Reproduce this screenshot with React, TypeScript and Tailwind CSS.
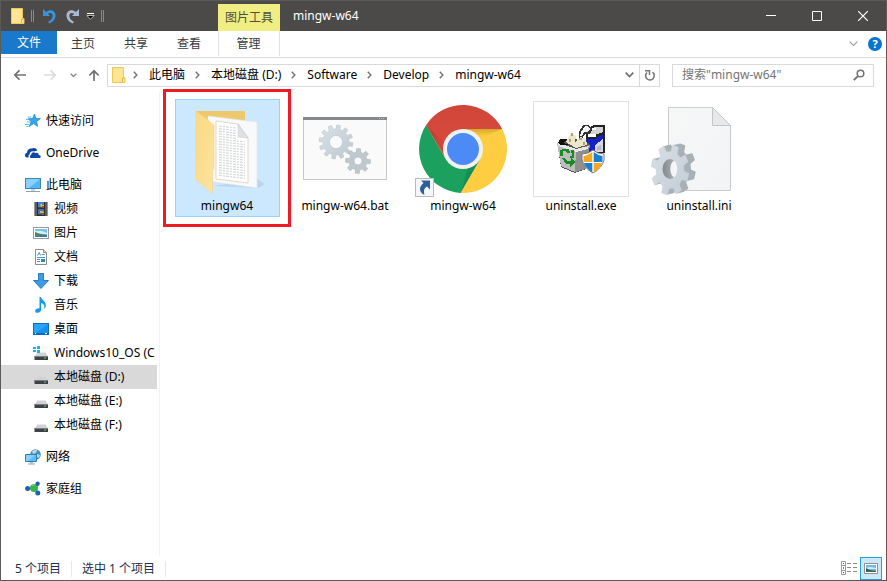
import type { ReactNode } from "react";
import clsx from "clsx";

const FONT = "font-['Noto_Sans','Noto_Sans_CJK_SC',sans-serif]";

// Closed outline of a cog wheel around (cx, cy)
function gear(cx: number, cy: number, outer: number, inner: number, teeth: number, turn = 0, tall = 1) {
  const step = (Math.PI * 2) / teeth;
  const pts: string[] = [];
  for (let i = 0; i < teeth; i++) {
    const a = i * step + turn;
    [
      [inner, -0.3],
      [outer, -0.2],
      [outer, 0.2],
      [inner, 0.3],
    ].forEach(([r, k]) => {
      const x = cx + r * Math.cos(a + k * step);
      const y = cy + r * tall * Math.sin(a + k * step);
      pts.push(`${x.toFixed(2)} ${y.toFixed(2)}`);
    });
  }
  return `M${pts.join("L")}Z`;
}

function hole(cx: number, cy: number, rx: number, ry = rx) {
  return `M${cx - rx} ${cy}a${rx} ${ry} 0 1 0 ${rx * 2} 0a${rx} ${ry} 0 1 0 ${-rx * 2} 0Z`;
}

/* ---------- small icons ---------- */

function Icon16({ children }: { children: ReactNode }) {
  return (
    <svg width="16" height="16" viewBox="0 0 16 16" className="shrink-0" aria-hidden="true">
      {children}
    </svg>
  );
}

function SmallFolder() {
  return (
    <svg width="14" height="18" viewBox="0 0 14 18" className="shrink-0" aria-hidden="true">
      <path d="M.5 1.500h11v10h1.500v5H.5z" fill="#ffe594" stroke="#eec84f" />
      <path d="M10.500 16V12h2.500" fill="none" stroke="#e6b93c" />
    </svg>
  );
}

function StarIcon() {
  return (
    <Icon16>
      <path d="M9.500 1l1.300 4.400 4.700.2-3.900 2.800 1 5-4-2.800-4.300 2.900 1.800-4.900L3 5.800l4.500-.2z" fill="#2fa8ec" stroke="#1b87cf" strokeWidth=".7" />
      <path d="M3 4h3M1 6.500h3M2 9h3M0 11.500h4M1.500 13.500h2" stroke="#5cbdf0" strokeWidth="1" />
    </Icon16>
  );
}

function OneDriveIcon() {
  return (
    <Icon16>
      <path d="M0 10.500C0 8.600 1 8 2 7.800 2 5 4.500 3 7 3.600 8.200 2.600 11.500 2.700 12.300 5.600L9 6.500C7 5.500 4.600 7 4.600 9.200 3.500 10 3.300 11.500 3.700 12.500H2C.8 12.500 0 11.500 0 10.500z" fill="#0d47a6" />
      <path d="M6.300 13C4.500 12.800 4.300 10.200 6.200 9.900 6.200 7.500 9 6.500 10.500 8.200 12 7.300 13.800 8.300 13.700 10 16.200 10 16.300 13 14.200 13z" fill="#0d47a6" />
    </Icon16>
  );
}

function PcIcon() {
  return (
    <Icon16>
      <rect x=".5" y="1.500" width="15" height="10" fill="#53b7f5" stroke="#3f85ae" />
      <path d="M1 2h14L4 11H1z" fill="#8ad2fb" />
      <path d="M6 12h4v2H6z" fill="#c6d5de" />
      <path d="M1 14.500h14" stroke="#8aa4b5" />
    </Icon16>
  );
}

function VideoIcon() {
  return (
    <Icon16>
      <rect x="1.500" y="1" width="13" height="14" fill="#2e2e2e" />
      <path d="M3 1.500v13M13 1.500v13" stroke="#e6e6e6" strokeDasharray="1 1" />
      <rect x="5" y="1" width="6" height="6" fill="#4a7fd6" />
      <rect x="5" y="8" width="6" height="6" fill="#3f72c4" />
      <path d="M7 3h2v1h2v2H8zM7 10h2l2 1v1H7z" fill="#e9b92e" />
      <path d="M9 5h2v2H9zM8 12h3v1H8z" fill="#c33a2a" />
      <path d="M5 6h4v1H5zM5 13h4v1H5z" fill="#2c5c33" />
    </Icon16>
  );
}

function PictureIcon() {
  return (
    <Icon16>
      <rect x=".5" y="2.500" width="15" height="11" fill="#fff" stroke="#9a9a9a" />
      <rect x="2" y="4" width="12" height="8" fill="#79c1ee" />
      <path d="M2 6h7l5 2v1H2z" fill="#d8effb" />
      <path d="M2 7l4 1.500 8 1.500v2H2z" fill="#4d8567" />
      <path d="M5 11l9-1v2H4z" fill="#3e78a8" />
    </Icon16>
  );
}

function DocumentIcon() {
  return (
    <Icon16>
      <path d="M2.500.500h8l3 3v12h-11z" fill="#fff" stroke="#8d8d8d" />
      <path d="M10.500.500v3h3" fill="#ddd" stroke="#8d8d8d" />
      <path d="M4.500 6.500l1.700-3 1.300 3M8.500 5.500h3M4 8.500h8M4 10.500h3M4 12.500h3" stroke="#3f93cc" fill="none" />
      <path d="M8 10h4v3H8z" fill="#3587bd" />
    </Icon16>
  );
}

function DownloadIcon() {
  return (
    <Icon16>
      <path d="M5.500.500h5v7h5L8 15.500.500 7.500h5z" fill="#3d9be6" stroke="#2b7cc1" />
    </Icon16>
  );
}

function MusicIcon() {
  return (
    <Icon16>
      <path d="M6.500 0h1.500c.5 3 5 4 4.800 8.500-.1 1.500-.8 3-1.800 3.500.8-2.500.5-5-2.800-6v6.200c0 2.300-1.900 3.600-3.700 3.600-3.400 0-3.200-4.900 2-4.600z" fill="#149aee" />
    </Icon16>
  );
}

function DesktopIcon() {
  return (
    <Icon16>
      <rect x=".5" y="2.500" width="15" height="11" fill="#1492f0" stroke="#0c6eb8" />
      <path d="M1 3h14L3 12H1z" fill="#2aa4fb" />
      <path d="M1 12.500h14" stroke="#0b68b1" />
      <path d="M2 12.500h1M12 12.500h2" stroke="#fff" />
    </Icon16>
  );
}

function DriveIcon({ system }: { system?: boolean }) {
  return (
    <Icon16>
      <path d="M4.500 7.500h8L15 11.500H1.500z" fill="#d0d2d4" />
      <path d="M1.500 11h13.500v4H1.500z" fill="#3f4244" />
      <path d="M1.500 11.500h13.500" stroke="#7c7f81" />
      <rect x="11" y="12.500" width="2" height="1" fill="#45e05a" />
      {system && (
        <>
          <path d="M0 1h7v6H0z" fill="#fff" />
          <path d="M0 2h3v2H0zM4 1h3v3H4zM0 5h3v2H0zM4 5h3v3H4z" fill="#19b1ee" />
        </>
      )}
    </Icon16>
  );
}

function NetworkIcon() {
  return (
    <Icon16>
      <circle cx="10.500" cy="5.500" r="5.300" fill="#4d8fb5" />
      <path d="M7 2.500c2-2 4-2 5-1.500l-1 3-3 1zM12 5l3 1-1 3-2-1z" fill="#b6dbed" />
      <path d="M.5 5.500h11v7H.5z" fill="#5dbdf8" stroke="#2e7eb4" />
      <path d="M1 6h9l-7 6H1z" fill="#88d1fb" />
      <path d="M5 13h3v1.500H5z" fill="#a9bfcc" />
      <path d="M3 15h7" stroke="#8ba5b5" />
    </Icon16>
  );
}

function HomeGroupIcon() {
  return (
    <Icon16>
      <path d="M3 7.500l6-1 4-4M9 7l4 6" stroke="#9ab7c9" strokeWidth="1" fill="none" />
      <circle cx="9" cy="7" r="4" fill="#38b449" />
      <path d="M6 5a3.500 3.500 0 0 1 5-1z" fill="#7fdc85" />
      <circle cx="2.600" cy="7.500" r="2.500" fill="#1c62b2" />
      <circle cx="12.600" cy="2.800" r="2.200" fill="#1c62b2" />
      <circle cx="12.800" cy="12" r="2.500" fill="#1c62b2" />
    </Icon16>
  );
}

/* ---------- large icons ---------- */

function Icon96({ children }: { children: ReactNode }) {
  return (
    <svg width="96" height="96" viewBox="0 0 96 96" className="shrink-0" aria-hidden="true">
      {children}
    </svg>
  );
}

function FolderLarge() {
  const lines = Array.from({ length: 20 }, (_, i) => 26 + i * 2.6);
  return (
    <Icon96>
      <defs>
        <linearGradient id="flap" x1="0" y1="0" x2="1" y2="1">
          <stop offset="0" stopColor="#f9d982" />
          <stop offset="1" stopColor="#ffe3a0" />
        </linearGradient>
      </defs>
      <path d="M35 85l44 2 7-4-8-5z" fill="#a9c4d8" opacity=".5" />
      <path d="M17 10h49v12H30z" fill="#edc86c" />
      <path d="M29 15l49 6v66l-49-7z" fill="#f8f9fa" stroke="#e3e6e8" strokeWidth=".7" />
      <path d="M37 20l22 3 10 14v45l-32-4z" fill="#fff" stroke="#dccfae" strokeWidth=".8" />
      {lines.map((y) => (
        <path key={y} d={`M40 ${y - 1}l${y < 38 ? 17 : 26} ${y < 38 ? 2 : 3}`} stroke="#d6d8d9" strokeWidth="1.200" strokeDasharray="3 1 2 1" />
      ))}
      <path d="M59 23l10 14-10-1z" fill="#dfe1e3" stroke="#c4c6c8" strokeWidth=".5" />
      <path d="M17 10l18 14v43l-1.500 3v22L17 79z" fill="url(#flap)" stroke="#f3d488" strokeWidth=".6" />
    </Icon96>
  );
}

function BatLarge() {
  return (
    <Icon96>
      <defs>
        <linearGradient id="cog" x1="0" y1="0" x2="1" y2="1">
          <stop offset="0" stopColor="#dae2e8" />
          <stop offset="1" stopColor="#bcc7cf" />
        </linearGradient>
      </defs>
      <rect x="6.500" y="16.500" width="83" height="62" fill="#fafafa" stroke="#c6c8c9" />
      <rect x="6" y="16" width="84" height="3" fill="#85898c" />
      <path d="M82 17.500h6" stroke="#b8bcbe" strokeDasharray="1 1" />
      <path d={gear(39, 41, 17, 13, 12, 0.15) + hole(39, 41, 6.500)} fill="url(#cog)" fillRule="evenodd" stroke="#c0cad1" strokeWidth=".7" strokeLinejoin="round" />
      <path d={gear(61, 60, 12.500, 9, 8, 0.05) + hole(61, 60, 4)} fill="#bec8cd" fillRule="evenodd" stroke="#b1bbc1" strokeWidth=".7" strokeLinejoin="round" />
    </Icon96>
  );
}

function ChromeLarge() {
  return (
    <Icon96>
      <defs>
        <linearGradient id="redBand" x1="0" y1="0" x2="0" y2="1">
          <stop offset="0" stopColor="#cf4639" />
          <stop offset="1" stopColor="#dc4b3e" />
        </linearGradient>
        <linearGradient id="redShade" x1="0" y1="0" x2="1" y2="0">
          <stop offset="0" stopColor="#a3352b" stopOpacity=".6" />
          <stop offset="1" stopColor="#a3352b" stopOpacity="0" />
        </linearGradient>
        <linearGradient id="yellowShade" x1="0" y1="0" x2="0" y2="1">
          <stop offset="0" stopColor="#bd8b1a" stopOpacity=".6" />
          <stop offset="1" stopColor="#e5b02b" stopOpacity="0" />
        </linearGradient>
      </defs>
      <path d="M11.100 24.100A44 44 0 0 0 45.700 91.900L65.300 58 48 48 30.700 58z" fill="#1ba05e" />
      <path d="M87.200 28A44 44 0 0 1 45.700 91.900L65.300 58 48 48V28z" fill="#ffcd42" />
      <path d="M11.100 24.100A44 44 0 0 1 87.200 28H48v20L30.700 58z" fill="url(#redBand)" />
      <path d="M11.100 24.100L30.700 58 30 42z" fill="url(#redShade)" />
      <path d="M50 28h37L66 37z" fill="url(#yellowShade)" />
      <path d="M65.300 58L45.700 91.900 53 66z" fill="#0b6b3b" opacity=".3" />
      <circle cx="48" cy="48" r="20" fill="#f1f1f1" />
      <circle cx="48" cy="48" r="16" fill="#4c8bf5" />
      {/* shortcut overlay */}
      <rect x=".5" y="77.500" width="18" height="18" fill="#f4f5f6" stroke="#b7bbbe" />
      <path d="M6 79.500h9v9l-3-3c-3 1.500-3.500 4.500-2.500 8.500-5-2.500-6.500-7.500-1-12z" fill="#2d5f9e" />
    </Icon96>
  );
}

function UninstallerLarge() {
  return (
    <Icon96>
      <rect x=".5" y=".5" width="95" height="95" fill="#fff" stroke="#e0e0e0" />
      <g shapeRendering="crispEdges">
        {/* box */}
        <path d="M57 26l4-2h11v28H53V33z" fill="#222" />
        <path d="M61 26h9v5l-9 3h-5z" fill="#d4d4d4" />
        <path d="M58 27h5v2h-5zM55 33h8v3h-8z" fill="#fff" />
        <path d="M51 38h11v13H51z" fill="#1420c8" />
        <path d="M62 38l8-4v17h-8z" fill="#d8d8e4" />
        <path d="M62 38l8-5v5l-8 6z" fill="#1420c8" />
        <path d="M64 46l4-2v5h-4z" fill="#b8b8c4" />
        <path d="M46 31l4-7h6l3 4-2 5h-5l-3 5h-3z" fill="#333" />
        <path d="M48 31l4-6h3l2 3-2 3h-4l-2 4h-2z" fill="#f2f2f2" />
        {/* recycle bin */}
        <path d="M24 42l4-4h15l14 5-4 25-11 4-14-6z" fill="#555" />
        <path d="M24 42l19 6 14-3-5 23-10 3-14-6z" fill="#bdbdbd" />
        <path d="M43 48l14-4-4 24-11 3z" fill="#8f8f8f" />
        <path d="M25 42l18 6 13-3-1 3-12 3-18-6z" fill="#e8e8e8" />
        <path d="M27 38h7l-4 4 6 2h-8l-3-2z" fill="#111" />
        <path d="M33 41l5-9 5 3-1 7 5-6 6 2 1 6-11 3z" fill="#ece7c8" />
        <path d="M38 32h2v3h-2zM36 38h2v3h-2zM46 37h3v2h-3zM50 41h2v3h-2z" fill="#aaa477" />
        <path d="M30 48h6l1 4h-3l-1-2h-3v5h-3v-6zM38 49h3v8h-4v-2h2zM29 57h3l2 3h4v-3l4 4-5 5v-3h-4z" fill="#178a24" />
      </g>
      <path d="M60 49l5 3 6 1v6q-2 8-11 13-9-5-11-13v-6l6-1z" fill="#fff" stroke="#777" strokeWidth="1" />
      <path d="M59.300 51v10H50.500v-6l4-1zM60.700 62v9.500q6-4 8.500-9.500z" fill="#f7a823" />
      <path d="M60.700 51v10h8.800v-6l-4-1zM59.300 62v9.500q-6-4-8.500-9.500z" fill="#1a7fd4" />
    </Icon96>
  );
}

function IniLarge() {
  const depth = [7, 6, 5, 4, 3, 2, 1];
  return (
    <Icon96>
      <defs>
        <linearGradient id="page" x1="0" y1="0" x2="1" y2="1">
          <stop offset="0" stopColor="#f6f7f7" />
          <stop offset="1" stopColor="#f2f4f6" />
        </linearGradient>
        <linearGradient id="face" x1="0" y1="0" x2="1" y2="1">
          <stop offset="0" stopColor="#d7dee5" />
          <stop offset="1" stopColor="#c4ced7" />
        </linearGradient>
        <linearGradient id="bore" x1="0" y1="0" x2="1" y2="0">
          <stop offset="0" stopColor="#85898c" />
          <stop offset="1" stopColor="#b5b9bc" />
        </linearGradient>
      </defs>
      <path d="M17.500 6.500h44l18 18v65h-62z" fill="url(#page)" stroke="#c9cbcc" />
      <path d="M61.500 6.500v18h18z" fill="#e6e8e9" stroke="#c3c5c6" />
      {depth.map((d) => (
        <path key={d} d={gear(19 + d, 69 - d / 4, 19, 14, 8, 0.3, 1.33)} fill="#a9b1b7" />
      ))}
      <path d={gear(19, 69, 19, 14, 8, 0.3, 1.33)} fill="url(#face)" stroke="#c9d1d8" strokeWidth=".6" strokeLinejoin="round" />
      <path d={hole(19, 68, 7.500, 10)} fill="url(#bore)" />
      <path d="M23 59.500c-5 3-5 14 0 17 4.500-3 4.500-14 0-17z" fill="#f4f5f6" />
    </Icon96>
  );
}

/* ---------- data ---------- */

type NavItem = { name: string; icon: ReactNode; child?: boolean; active?: boolean };

const NAV: { key: string; items: NavItem[] }[] = [
  { key: "quick", items: [{ name: "快速访问", icon: <StarIcon /> }] },
  { key: "onedrive", items: [{ name: "OneDrive", icon: <OneDriveIcon /> }] },
  {
    key: "pc",
    items: [
      { name: "此电脑", icon: <PcIcon /> },
      { name: "视频", icon: <VideoIcon />, child: true },
      { name: "图片", icon: <PictureIcon />, child: true },
      { name: "文档", icon: <DocumentIcon />, child: true },
      { name: "下载", icon: <DownloadIcon />, child: true },
      { name: "音乐", icon: <MusicIcon />, child: true },
      { name: "桌面", icon: <DesktopIcon />, child: true },
      { name: "Windows10_OS (C", icon: <DriveIcon system />, child: true },
      { name: "本地磁盘 (D:)", icon: <DriveIcon />, child: true, active: true },
      { name: "本地磁盘 (E:)", icon: <DriveIcon />, child: true },
      { name: "本地磁盘 (F:)", icon: <DriveIcon />, child: true },
    ],
  },
  { key: "network", items: [{ name: "网络", icon: <NetworkIcon /> }] },
  { key: "homegroup", items: [{ name: "家庭组", icon: <HomeGroupIcon /> }] },
];

const FILES = [
  { name: "mingw64", icon: <FolderLarge />, selected: true },
  { name: "mingw-w64.bat", icon: <BatLarge /> },
  { name: "mingw-w64", icon: <ChromeLarge /> },
  { name: "uninstall.exe", icon: <UninstallerLarge /> },
  { name: "uninstall.ini", icon: <IniLarge /> },
];

const CRUMBS = ["此电脑", "本地磁盘 (D:)", "Software", "Develop", "mingw-w64"];

const TABS = ["主页", "共享", "查看"];

/* ---------- sections ---------- */

function TitleBar() {
  return (
    <header className="flex h-[30px] shrink-0 bg-[#4c4a48] text-white">
      <div className="flex w-[217px] shrink-0 items-center pl-[10px]">
        <SmallFolder />
        <span className="ml-[6px] h-3 w-[3px] border-x border-[#8b8a89]" />
        <button aria-label="撤消" className="ml-2">
          <svg width="14" height="16" viewBox="0 0 14 16">
            <path d="M1 1v7h7L5.800 5.800C9 3.500 11.500 6 10.500 9 10 11 8.500 12.500 6 14l1.500 1.500C11 14 13.500 11 13.500 7.500 13.500 2.500 8 .5 4 4z" fill="#3993dd" />
          </svg>
        </button>
        <button aria-label="恢复" className="ml-[10px]">
          <svg width="14" height="16" viewBox="0 0 14 16">
            <path d="M13 1v7H6l2.200-2.200C5 3.500 2.500 6 3.500 9c.5 2 2 3.500 4.500 5l-1.500 1.500C3 14 .5 11 .5 7.500.5 2.500 6 .5 10 4z" fill="#a9b9d2" />
          </svg>
        </button>
        <button aria-label="自定义快速访问工具栏" className="ml-[6px]">
          <svg width="9" height="8" viewBox="0 0 9 8">
            <path d="M1 1.500h7" stroke="#fff" />
            <path d="M.8 3.500h7.400L4.500 7.200z" fill="#000" stroke="#ddd" strokeWidth=".8" />
          </svg>
        </button>
        <span className="ml-[6px] h-3 w-[3px] border-x border-[#8b8a89]" />
      </div>
      <div className="mt-[3px] flex w-[62px] shrink-0 items-center justify-center bg-[#f0ee82] text-[#4d4d3c]">图片工具</div>
      <h1 className="ml-[13px] flex-1 leading-[30px]">mingw-w64</h1>
      <div className="flex">
        <button aria-label="最小化" className="flex w-[46px] items-center justify-center">
          <svg width="10" height="10" viewBox="0 0 10 10">
            <path d="M0 4.500h10" stroke="#fff" />
          </svg>
        </button>
        <button aria-label="最大化" className="flex w-[46px] items-center justify-center">
          <svg width="10" height="10" viewBox="0 0 10 10">
            <path d="M.5.500h9v9h-9z" fill="none" stroke="#fff" />
          </svg>
        </button>
        <button aria-label="关闭" className="flex w-[46px] items-center justify-center">
          <svg width="10" height="10" viewBox="0 0 10 10">
            <path d="M0 0l10 10M10 0L0 10" stroke="#fff" strokeWidth="1.200" />
          </svg>
        </button>
      </div>
    </header>
  );
}

function RibbonTabs() {
  return (
    <nav className="flex h-[27px] shrink-0 border-b border-[#d9dadb] text-[#3b3b3b]">
      <button className="h-[23px] w-14 bg-[#1979ca] text-white">文件</button>
      {TABS.map((tab) => (
        <button key={tab} className="h-[25px] w-[53px] pr-px">
          {tab}
        </button>
      ))}
      <button className="ml-[2px] h-[25px] w-[62px] border-x border-[#e2e2e2] pr-px">管理</button>
      <div className="ml-auto flex items-center gap-[10px] pr-1">
        <button aria-label="展开功能区">
          <svg width="9" height="6" viewBox="0 0 9 6">
            <path d="M.7.700l3.800 3.800L8.300.700" fill="none" stroke="#9b9b9b" strokeWidth="1.200" />
          </svg>
        </button>
        <button aria-label="帮助" className="h-[14px] w-[14px] rounded-full bg-[#0873d0] text-[11px] leading-[14px] font-bold text-white">
          ?
        </button>
      </div>
    </nav>
  );
}

function Chevron() {
  return (
    <svg width="5" height="8" viewBox="0 0 5 8" className="mr-[11px] ml-[10px] shrink-0" aria-hidden="true">
      <path d="M.8.800L3.800 4 .8 7.200" fill="none" stroke="#777" strokeWidth="1.500" />
    </svg>
  );
}

function AddressBar() {
  return (
    <div className="flex h-[34px] shrink-0 items-center pr-3 pl-[12px]">
      <button aria-label="后退" className="w-[14px]">
        <svg width="14" height="12" viewBox="0 0 14 12">
          <path d="M13 6H2M6.500 1.300L1.800 6l4.700 4.700" fill="none" stroke="#717171" strokeWidth="1.700" />
        </svg>
      </button>
      <button aria-label="前进" className="ml-4 w-[14px]">
        <svg width="14" height="12" viewBox="0 0 14 12">
          <path d="M1 6h11M7.500 1.300L12.200 6l-4.700 4.700" fill="none" stroke="#dcdcdc" strokeWidth="1.700" />
        </svg>
      </button>
      <button aria-label="最近浏览的位置" className="ml-[13px] w-[7px]">
        <svg width="7" height="5" viewBox="0 0 7 5">
          <path d="M.7.700l2.800 2.800L6.300.700" fill="none" stroke="#8a8a8a" strokeWidth="1.500" />
        </svg>
      </button>
      <button aria-label="上移" className="ml-[11px] w-3">
        <svg width="12" height="12" viewBox="0 0 12 12">
          <path d="M6 12V2M1.300 6.500L6 1.800l4.700 4.700" fill="none" stroke="#717171" strokeWidth="1.700" />
        </svg>
      </button>
      <div className="ml-[7px] flex h-[23px] min-w-0 flex-1 items-center border border-[#d9d9d9] pl-[4px] text-black">
        <SmallFolder />
        <div className="ml-[-3px] flex min-w-0 flex-1 items-center overflow-hidden pb-px">
          {CRUMBS.map((crumb) => (
            <div key={crumb} className="flex items-center">
              <Chevron />
              <button className="whitespace-nowrap">{crumb}</button>
            </div>
          ))}
        </div>
        <button aria-label="以前的位置" className="flex w-[19px] justify-center">
          <svg width="9" height="6" viewBox="0 0 9 6">
            <path d="M.7.700l3.800 3.800L8.300.700" fill="none" stroke="#6d6d6d" strokeWidth="1.700" />
          </svg>
        </button>
        <button aria-label="刷新" className="flex h-full w-5 items-center justify-center border-l border-[#d9d9d9]">
          <svg width="12" height="13" viewBox="0 0 12 13">
            <path d="M8.500 3.200A4.300 4.300 0 1 1 3 3.500" fill="none" stroke="#777" strokeWidth="1.600" />
            <path d="M1 1.800h4.500v4.200" fill="none" stroke="#777" strokeWidth="1.500" />
          </svg>
        </button>
      </div>
      <div className="ml-3 flex h-[23px] w-[202px] shrink items-center border border-[#d9d9d9] pr-2 pl-[9px]">
        <input
          type="search"
          aria-label="搜索"
          placeholder={'搜索"mingw-w64"'}
          className="min-w-0 flex-1 bg-transparent outline-none placeholder:text-[#757575]"
        />
        <svg width="12" height="12" viewBox="0 0 12 12" aria-hidden="true">
          <circle cx="7.500" cy="4.500" r="3.300" fill="none" stroke="#717171" strokeWidth="1.500" />
          <path d="M5.200 6.800L.8 11.200" stroke="#717171" strokeWidth="1.900" />
        </svg>
      </div>
    </div>
  );
}

function NavPane() {
  return (
    <aside className="w-[159px] shrink-0 overflow-hidden border-r border-[#f2f2f2] pt-[17px] pr-[2px] text-black">
      <div className="flex flex-col gap-2">
        {NAV.map((group) => (
          <ul key={group.key}>
            {group.items.map((item) => (
              <li key={item.name}>
                <button
                  className={clsx(
                    "flex h-6 w-full items-center gap-[5px] whitespace-nowrap",
                    item.child ? "pl-8" : "pl-6",
                    item.active && "bg-[#d9d9d9]",
                  )}
                >
                  {item.icon}
                  {item.name}
                </button>
              </li>
            ))}
          </ul>
        ))}
      </div>
    </aside>
  );
}

function FileGrid() {
  return (
    <main className="min-w-0 flex-1 pt-[7px] pl-[15px]">
      <div className="flex flex-wrap gap-[13px]">
        {FILES.map((file) => (
          <div key={file.name} className="relative">
            <button
              className={clsx(
                "flex h-[118px] w-[105px] flex-col items-center gap-px border pt-px pr-px text-black",
                file.selected ? "border-[#99d1ff] bg-[#cce8ff]" : "border-transparent",
              )}
            >
              {file.icon}
              <span className="leading-4">{file.name}</span>
            </button>
            {file.selected && (
              <span className="pointer-events-none absolute -top-[10px] -right-[11px] -bottom-[10px] -left-3 border-[3px] border-[#ed1c24]" />
            )}
          </div>
        ))}
      </div>
    </main>
  );
}

function StatusBar() {
  return (
    <footer className="flex h-6 shrink-0 items-center pr-1 pl-[14px] text-[#1e2f4d]">
      <div className="flex items-center gap-[10px] pt-[2px]">
        <span>5 个项目</span>
        <span className="h-4 border-l border-[#e8e8e8]" />
        <span>选中 1 个项目</span>
        <span className="h-4 border-l border-[#e8e8e8]" />
      </div>
      <button aria-label="详细信息" className="ml-auto">
        <svg width="17" height="14" viewBox="0 0 17 14">
          <path d="M.5.500h4v13h-4zM.5 4.500h4M.5 9.500h4" fill="#fff" stroke="#9a9a9a" />
          <path d="M6 2.500h4M12 2.500h4M6 6.500h4M12 6.500h4M6 10.500h4M12 10.500h4" stroke="#8a8a8a" />
          <path d="M2 2h1v1H2z" fill="#2e8b57" />
          <path d="M2 6h1v2H2z" fill="#3a8ee6" />
          <path d="M2 11h1v1H2z" fill="#d22" />
        </svg>
      </button>
      <button aria-label="大图标" className="ml-[2px] flex h-[23px] w-[22px] items-center justify-center border border-[#26a0da] bg-[#cce8f6]">
        <svg width="14" height="11" viewBox="0 0 14 11">
          <path d="M.5.500h13v10H.5z" fill="#fff" stroke="#8f8f8f" />
          <path d="M2 2h10v7H2z" fill="#79b3ee" />
          <path d="M2 5l4-1 6 1v1H2z" fill="#dcefff" />
          <path d="M2 5l4 2 6 1v1H2z" fill="#34694f" />
        </svg>
      </button>
    </footer>
  );
}

export default function App() {
  return (
    <div className={clsx("flex h-screen flex-col border border-[#5b5a59] bg-white text-[12px] leading-4", FONT)}>
      <TitleBar />
      <RibbonTabs />
      <AddressBar />
      <div className="flex min-h-0 flex-1">
        <NavPane />
        <FileGrid />
      </div>
      <StatusBar />
    </div>
  );
}
